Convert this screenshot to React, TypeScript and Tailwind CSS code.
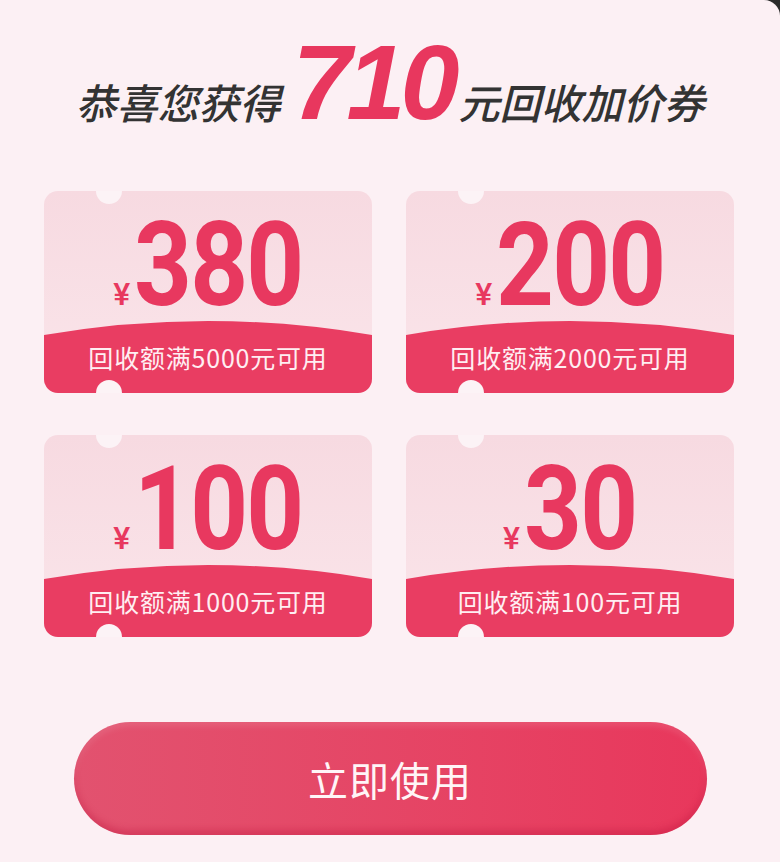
import React from "react";

const cjk = { fontFamily: "'Noto Sans CJK SC', 'Noto Sans', sans-serif" };
const roboto = { fontFamily: "Roboto, 'Liberation Sans', sans-serif" };

type Coupon = { amount: string; cond: string };

const coupons: Coupon[] = [
  { amount: "380", cond: "回收额满5000元可用" },
  { amount: "200", cond: "回收额满2000元可用" },
  { amount: "100", cond: "回收额满1000元可用" },
  { amount: "30", cond: "回收额满100元可用" },
];

function CouponCard({ amount, cond }: Coupon) {
  // digits are horizontally condensed; remove the width the transform frees
  const shrink = -Math.round(amount.length * 63.2 * 0.13);
  return (
    <div className="relative w-[328px] h-[202px] rounded-[14px] overflow-hidden bg-gradient-to-b from-[#f7dae1] to-[#fae5ea] flex flex-col">
      <div className="h-[130px] flex items-center justify-center pt-[18px]">
        <div className="flex items-baseline">
          <span className="text-[32px] leading-none font-medium text-[#e8385f] mr-[4px]" style={roboto}>
            ¥
          </span>
          <span
            className="inline-block origin-left scale-x-[0.87] text-[116px] leading-none font-bold text-[#e8385f] tracking-[-2px]"
            style={{ ...roboto, marginRight: shrink }}
          >
            {amount}
          </span>
        </div>
      </div>
      <svg className="block w-full h-[14px]" viewBox="0 0 328 14" preserveAspectRatio="none">
        <path d="M0 14 Q164 -14 328 14 Z" fill="#e93d62" />
      </svg>
      <div className="flex-1 bg-[#e93d62] flex justify-center pt-[7px]">
        <span className="text-[25px] leading-[30px] text-[#ffeef2] tracking-[0.8px]" style={cjk}>
          {cond}
        </span>
      </div>
      <div className="absolute z-10 left-[52px] top-[-13px] w-[26px] h-[26px] rounded-full bg-[#fcf3f6]" />
      <div className="absolute z-10 left-[52px] bottom-[-13px] w-[26px] h-[26px] rounded-full bg-[#fcf3f6]" />
    </div>
  );
}

export default function App() {
  return (
    <div className="w-[780px] h-[862px] bg-[#2a2a2a]">
      <div className="w-full h-full bg-[#fcf0f4] rounded-tr-[16px] flex flex-col">
        <div className="h-[191px] pt-[29px] flex justify-center items-baseline">
          <span className="text-[41px] leading-none font-medium italic text-[#333333]" style={cjk}>
            恭喜您获得
          </span>
          <span
            className="text-[106px] leading-none font-bold italic text-[#e8375e] tracking-[-5px] ml-[12px] mr-[4px]"
            style={{ fontFamily: "'Liberation Sans', Arial, sans-serif" }}
          >
            710
          </span>
          <span className="text-[41px] leading-none font-medium italic text-[#333333]" style={cjk}>
            元回收加价券
          </span>
        </div>
        <div className="grid grid-cols-[328px_328px] gap-x-[34px] gap-y-[42px] pl-[44px]">
          {coupons.map((c) => (
            <CouponCard key={c.amount} {...c} />
          ))}
        </div>
        <div className="mt-[85px] flex justify-center">
          <button className="w-[633px] h-[113px] rounded-full bg-gradient-to-r from-[#e2526f] to-[#e8375c] shadow-[inset_0_-5px_6px_rgba(190,20,60,0.35),inset_0_4px_6px_rgba(255,255,255,0.12)] flex items-center justify-center">
            <span className="text-[40px] leading-none text-[#fff5f7] tracking-[1px]" style={cjk}>
              立即使用
            </span>
          </button>
        </div>
      </div>
    </div>
  );
}
